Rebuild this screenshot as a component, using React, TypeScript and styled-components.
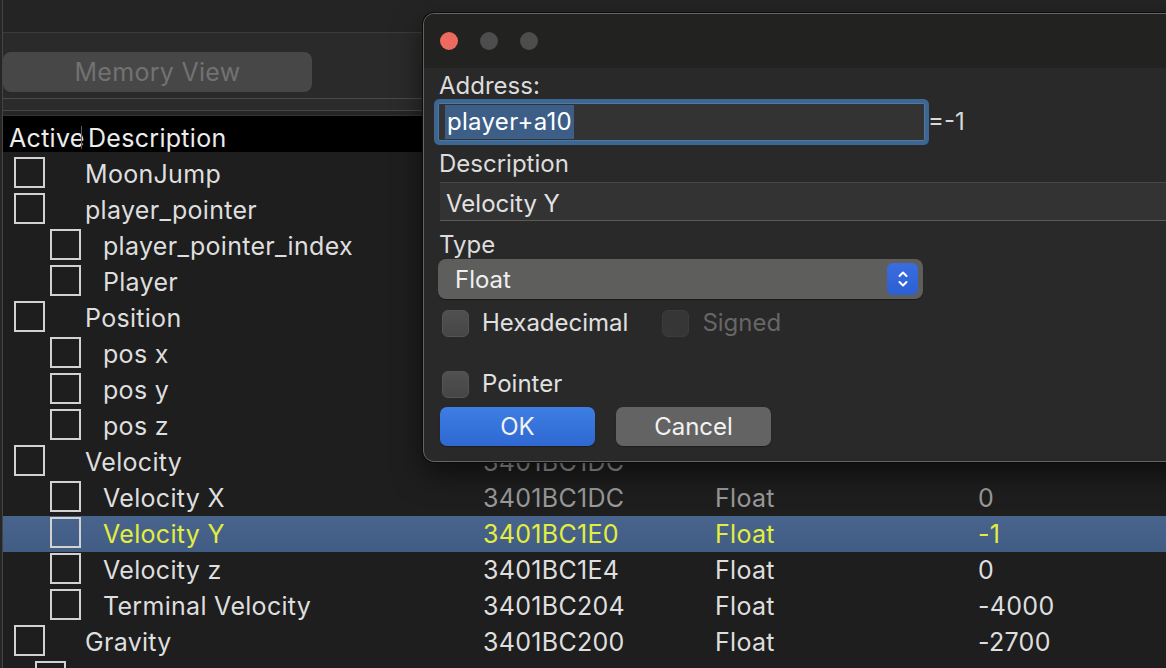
import React from 'react';
import styled, { createGlobalStyle } from 'styled-components';

const Global = createGlobalStyle`
  html, body { margin: 0; padding: 0; background: #1e1e1e; }
  body { font-family: Inter, "Noto Sans", "Liberation Sans", sans-serif; -webkit-font-smoothing: antialiased; }
  #root { width: 1166px; height: 668px; }
`;

const Screen = styled.div`
  position: relative;
  width: 1166px;
  height: 668px;
  overflow: hidden;
  background: #262626;
  padding-left: 2px;
  box-sizing: border-box;
  display: flex;
`;

const MainWindow = styled.div`
  flex: 1;
  display: flex;
  flex-direction: column;
  border-left: 1px solid #444;
  background: #1e1e1e;
  min-width: 0;
`;

const TopBar = styled.div`
  height: 32px;
  flex: none;
  background: #242424;
  border-bottom: 1px solid #3b3b3b;
`;

const Toolbar = styled.div`
  height: 66px;
  flex: none;
  background: #2a2a2a;
  border-bottom: 1px solid #4a4a4a;
  display: flex;
  align-items: flex-start;
  padding-top: 19px;
  box-sizing: border-box;
`;

const ToolButton = styled.div`
  width: 309px;
  height: 40px;
  border-radius: 8px;
  background: #474747;
  color: #727272;
  font-size: 25px;
  letter-spacing: 0.3px;
  display: flex;
  align-items: center;
  justify-content: center;
`;

const Gap = styled.div<{ $h: number; $bg: string; $line: string }>`
  height: ${(p) => p.$h}px;
  flex: none;
  background: ${(p) => p.$bg};
  border-bottom: 1px solid ${(p) => p.$line};
`;

const Header = styled.div`
  height: 36px;
  flex: none;
  background: #000;
  display: flex;
  align-items: flex-end;
  padding-left: 6px;
  color: #ececec;
  font-size: 25px;
  letter-spacing: 0.3px;
  line-height: 28px;
  box-sizing: border-box;
`;

const HeaderCell = styled.div<{ $w?: number }>`
  ${(p) => (p.$w ? `width: ${p.$w}px;` : '')}
  padding-left: ${(p) => (p.$w ? 0 : 6)}px;
  white-space: nowrap;
`;

const HeaderSep = styled.div`
  width: 1px;
  height: 23px;
  margin-bottom: 3px;
  background: #5a5a5a;
`;

const List = styled.div`
  padding-top: 4px;
  display: flex;
  flex-direction: column;
`;

const Row = styled.div<{ $selected?: boolean; $dim?: boolean }>`
  height: 36px;
  flex: none;
  display: grid;
  grid-template-columns: 480px 232px 263px 1fr;
  align-items: center;
  font-size: 25px;
  letter-spacing: 0.3px;
  white-space: nowrap;
  color: ${(p) => (p.$selected ? '#e3ee3d' : p.$dim ? '#9a9a9a' : '#dedede')};
  background: ${(p) => (p.$selected ? 'linear-gradient(#48648d, #425d84)' : 'transparent')};
`;

const NameCell = styled.div`
  display: flex;
  align-items: center;
`;

const RowName = styled.span<{ $selected?: boolean }>`
  color: ${(p) => (p.$selected ? '#e3ee3d' : '#dedede')};
`;

const TreeCheck = styled.div<{ $indent: number; $gap: number }>`
  width: 31px;
  height: 31px;
  box-sizing: border-box;
  border: 2px solid #d2d2d2;
  margin-left: ${(p) => p.$indent}px;
  margin-right: ${(p) => p.$gap}px;
  margin-bottom: 3px;
  flex: none;
`;

const Cell = styled.div`
  overflow: hidden;
`;

/* ---------- dialog ---------- */

const Dialog = styled.div`
  position: absolute;
  left: 423px;
  top: 13px;
  width: 780px;
  height: 449px;
  box-sizing: border-box;
  border: 1px solid #646464;
  border-radius: 11px;
  background: #292929;
  overflow: hidden;
  box-shadow: 0 0 0 1px #0c0c0c, 0 12px 30px rgba(0, 0, 0, 0.55);
  display: flex;
  flex-direction: column;
`;

const TitleBar = styled.div`
  height: 54px;
  flex: none;
  background: #222220;
  display: flex;
  align-items: center;
  gap: 22px;
  padding-left: 16px;
`;

const Light = styled.div<{ $color: string }>`
  width: 18px;
  height: 18px;
  border-radius: 50%;
  background: ${(p) => p.$color};
`;

const Body = styled.div`
  flex: 1;
  padding: 4px 0 0 15px;
  display: flex;
  flex-direction: column;
  align-items: flex-start;
  color: #dcdcdc;
  font-size: 24px;
`;

const Label = styled.div<{ $mt?: number }>`
  line-height: 28px;
  margin-top: ${(p) => p.$mt ?? 0}px;
  color: #dcdcdc;
`;

const AddressRow = styled.div`
  margin-top: 3px;
  display: flex;
  align-items: center;
  gap: 2px;
  margin-left: -1px;
`;

const FocusField = styled.div`
  width: 487px;
  height: 38px;
  box-sizing: border-box;
  background: #333;
  border: 1px solid #4b78a6;
  border-radius: 2px;
  box-shadow: 0 0 0 4px #3d6791;
  padding-left: 6px;
  display: flex;
  align-items: center;
`;

const Selection = styled.span`
  background: #3d5f87;
  color: #fff;
  height: 34px;
  line-height: 34px;
  padding: 0 2px;
  letter-spacing: 0.3px;
`;

const Suffix = styled.span`
  color: #d8d8d8;
  line-height: 28px;
  margin-left: 1px;
`;

const TextField = styled.div`
  margin-top: 4px;
  margin-left: 1px;
  align-self: stretch;
  height: 39px;
  box-sizing: border-box;
  background: #333333;
  border-top: 1px solid #474747;
  border-bottom: 1px solid #5a5a5a;
  padding: 4px 0 0 6px;
  display: flex;
  align-items: center;
  color: #e2e2e2;
`;

const Select = styled.div`
  margin-left: -1px;
  width: 485px;
  height: 40px;
  box-sizing: border-box;
  border-radius: 8px;
  background: #5e5e5d;
  box-shadow: 0 1px 1px rgba(0, 0, 0, 0.35);
  display: flex;
  align-items: center;
  justify-content: space-between;
  padding: 0 5px 0 17px;
  color: #f0f0f0;
`;

const Stepper = styled.div`
  width: 31px;
  height: 32px;
  border-radius: 6px;
  background: linear-gradient(#3a6ee0, #2c5fd2);
  display: flex;
  align-items: center;
  justify-content: center;
`;

const CheckRow = styled.div<{ $mt: number }>`
  margin-top: ${(p) => p.$mt}px;
  margin-left: 3px;
  display: flex;
  align-items: center;
  gap: 34px;
`;

const CheckItem = styled.label<{ $disabled?: boolean }>`
  display: flex;
  align-items: center;
  gap: 13px;
  color: ${(p) => (p.$disabled ? '#666' : '#e0e0e0')};
  line-height: 28px;
`;

const MacCheck = styled.span<{ $disabled?: boolean }>`
  width: 27px;
  height: 27px;
  box-sizing: border-box;
  border-radius: 6px;
  background: ${(p) => (p.$disabled ? '#363636' : 'linear-gradient(#505050, #464646)')};
  border: 1px solid ${(p) => (p.$disabled ? '#3c3c3c' : '#555')};
`;

const ButtonRow = styled.div`
  margin-top: 9px;
  margin-left: 1px;
  display: flex;
  gap: 21px;
`;

const Button = styled.div<{ $primary?: boolean }>`
  width: 155px;
  height: 39px;
  border-radius: 7px;
  display: flex;
  align-items: center;
  justify-content: center;
  color: #f2f2f2;
  background: ${(p) => (p.$primary ? 'linear-gradient(#3d7ee4, #2f68d2)' : '#636363')};
  box-shadow: 0 1px 1px rgba(0, 0, 0, 0.3);
`;

type Item = {
  name: string;
  level: number;
  addr?: string;
  type?: string;
  value?: string;
  selected?: boolean;
  dim?: boolean;
};

const items: Item[] = [
  { name: 'MoonJump', level: 0 },
  { name: 'player_pointer', level: 0 },
  { name: 'player_pointer_index', level: 1 },
  { name: 'Player', level: 1 },
  { name: 'Position', level: 0 },
  { name: 'pos x', level: 1 },
  { name: 'pos y', level: 1 },
  { name: 'pos z', level: 1 },
  { name: 'Velocity', level: 0, addr: '3401BC1DC', dim: true },
  { name: 'Velocity X', level: 1, addr: '3401BC1DC', type: 'Float', value: '0', dim: true },
  { name: 'Velocity Y', level: 1, addr: '3401BC1E0', type: 'Float', value: '-1', selected: true },
  { name: 'Velocity z', level: 1, addr: '3401BC1E4', type: 'Float', value: '0' },
  { name: 'Terminal Velocity', level: 1, addr: '3401BC204', type: 'Float', value: '-4000' },
  { name: 'Gravity', level: 0, addr: '3401BC200', type: 'Float', value: '-2700' },
  { name: '', level: 2 },
];

const indents: Record<number, [number, number]> = {
  0: [11, 40],
  1: [47, 22],
  2: [32, 22],
};

const Chevrons = () => (
  <svg width="14" height="22" viewBox="0 0 14 22" fill="none" stroke="#fff" strokeWidth="2" strokeLinecap="round" strokeLinejoin="round">
    <path d="M3.5 8 L7 4.5 L10.5 8" />
    <path d="M3.5 14 L7 17.5 L10.5 14" />
  </svg>
);

export default function App() {
  return (
    <>
      <Global />
      <Screen>
        <MainWindow>
          <TopBar />
          <Toolbar>
            <ToolButton>Memory View</ToolButton>
          </Toolbar>
          <Gap $h={11} $bg="#2b2b2b" $line="#474747" />
          <Gap $h={4} $bg="#262626" $line="#333" />
          <Header>
            <HeaderCell $w={72}>Active</HeaderCell>
            <HeaderSep />
            <HeaderCell>Description</HeaderCell>
          </Header>
          <List>
            {items.map((it, i) => {
              const [ind, gap] = indents[it.level];
              return (
                <Row key={i} $selected={it.selected} $dim={it.dim}>
                  <NameCell>
                    <TreeCheck $indent={ind} $gap={gap} />
                    <RowName $selected={it.selected}>{it.name}</RowName>
                  </NameCell>
                  <Cell>{it.addr}</Cell>
                  <Cell>{it.type}</Cell>
                  <Cell>{it.value}</Cell>
                </Row>
              );
            })}
          </List>
        </MainWindow>

        <Dialog>
          <TitleBar>
            <Light $color="#ec6a5e" />
            <Light $color="#4d4d4d" />
            <Light $color="#4d4d4d" />
          </TitleBar>
          <Body>
            <Label>Address:</Label>
            <AddressRow>
              <FocusField>
                <Selection>player+a10</Selection>
              </FocusField>
              <Suffix>=-1</Suffix>
            </AddressRow>
            <Label $mt={9}>Description</Label>
            <TextField>Velocity Y</TextField>
            <Label $mt={10}>Type</Label>
            <Select>
              <span>Float</span>
              <Stepper>
                <Chevrons />
              </Stepper>
            </Select>
            <CheckRow $mt={10}>
              <CheckItem>
                <MacCheck />
                Hexadecimal
              </CheckItem>
              <CheckItem $disabled>
                <MacCheck $disabled />
                Signed
              </CheckItem>
            </CheckRow>
            <CheckRow $mt={33}>
              <CheckItem>
                <MacCheck />
                Pointer
              </CheckItem>
            </CheckRow>
            <ButtonRow>
              <Button $primary>OK</Button>
              <Button>Cancel</Button>
            </ButtonRow>
          </Body>
        </Dialog>
      </Screen>
    </>
  );
}
